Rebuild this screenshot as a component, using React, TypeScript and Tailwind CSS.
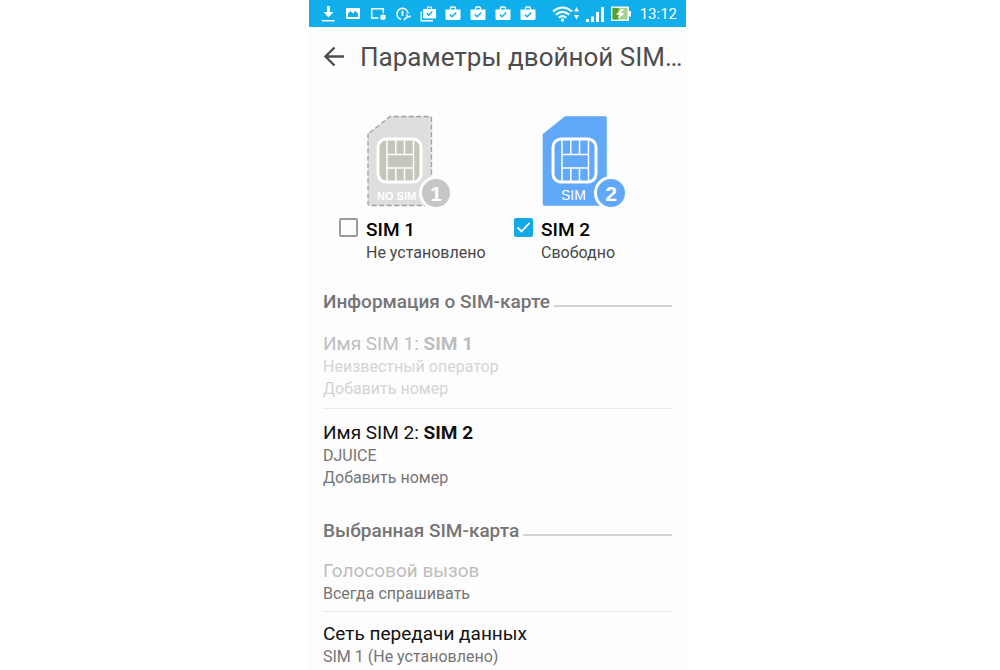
import { useState } from 'react';
import type { ReactNode } from 'react';

const Bag = () => (
  <svg viewBox="0 0 16 16" className="size-4 shrink-0">
    <path d="M5.500 4V2.200Q5.500 1 6.700 1h2.600q1.200 0 1.200 1.200V4" fill="none" stroke="white" strokeWidth="1.300" />
    <path d="M.5 3.500h15v9q0 1.500-1.500 1.500H2Q.5 14 .5 12.500z" fill="white" />
    <path d="M4.800 8.600l2.300 2.200 4.200-4.300" fill="none" stroke="#10aeeb" strokeWidth="1.400" />
  </svg>
);

const StatusBar = () => (
  <header className="flex h-[27px] items-center bg-[#10aeeb] pr-[9px] pl-[11px] text-white">
    <div className="flex items-center gap-[9px]">
      {/* download */}
      <svg viewBox="0 0 16 16" className="size-4 shrink-0" fill="white">
        <path d="M7 0h3v6h3.500l-5 5.500-5-5.500H7z" />
        <path d="M2 14h12.500v1.500H2z" />
      </svg>
      {/* picture */}
      <svg viewBox="0 0 16 16" className="size-4 shrink-0">
        <rect x="1" y="2" width="14" height="11" rx="1" fill="white" />
        <path d="M3 11V7.500L5.500 5l2.500 2.500L10.500 5 13 7.500V11z" fill="#10aeeb" />
      </svg>
      {/* screen with gear */}
      <svg viewBox="0 0 16 16" className="size-4 shrink-0" fill="none" stroke="white">
        <path d="M8.500 12H1.700V2.700h11.600V7" strokeWidth="1.500" />
        <circle cx="13" cy="11.200" r="1.800" strokeWidth="1.600" />
        <path d="M13 8.200v6M10.400 9.700l5.200 3M10.400 12.700l5.200-3" strokeWidth=".8" />
      </svg>
      {/* gauge with wrench */}
      <svg viewBox="0 0 16 16" className="size-4 shrink-0" fill="none" stroke="white">
        <path d="M6 13.200A5.500 5.500 0 1 1 13 7.500" strokeWidth="1.600" />
        <path d="M7.500 4.800v5" strokeWidth="1.800" />
        <path d="M9 14l3.500-3.500M12 8.500q-.5 2.500 2.500 2.200l1-1.200" strokeWidth="1.600" />
      </svg>
      {/* stacked bags */}
      <svg viewBox="0 0 16 16" className="size-4 shrink-0">
        <path d="M1.200 5.500v9.300H13" fill="none" stroke="white" strokeWidth="1.400" />
        <path d="M7.500 3V1.800Q7.500 1 8.300 1h2.400q.8 0 .8.8V3" fill="none" stroke="white" strokeWidth="1.200" />
        <path d="M3 3h13v8.500q0 1-1 1H4q-1 0-1-1z" fill="white" />
        <path d="M6.700 7.300l2 2 3.600-3.800" fill="none" stroke="#10aeeb" strokeWidth="1.300" />
      </svg>
      <Bag />
      <Bag />
      <Bag />
      <Bag />
    </div>
    <div className="ml-auto flex items-center gap-[7px]">
      <svg viewBox="0 0 28 16" className="h-4 w-7 shrink-0" fill="none" stroke="white">
        <path d="M2 5.500Q11.500-2.500 21 5.500M4.800 8.700Q11.500 3 18.200 8.700M7.800 11.800Q11.500 8.500 15.200 11.800" strokeWidth="2" />
        <circle cx="11.500" cy="14" r="1.700" fill="white" stroke="none" />
        <path d="M23 5.500l2.500-4.500 2.500 4.500zM23 9l2.500 4.500L28 9z" fill="white" stroke="none" />
      </svg>
      <svg viewBox="0 0 18 16" className="h-4 w-[18px] shrink-0" fill="white">
        <path d="M0 13h3v3H0zM5 10.500h3V16H5zM10 6h3v10h-3zM15 1h3v15h-3z" />
      </svg>
      <svg viewBox="0 0 20 16" className="h-4 w-5 shrink-0">
        <rect x=".8" y="1.200" width="16.400" height="13" fill="#a6cf93" stroke="white" strokeWidth="1.400" />
        <path d="M1.500 1.900h6v11.600h-6z" fill="#4fa326" />
        <path d="M18 5h2v5.500h-2z" fill="white" />
        <path d="M10.500 3L5 8.500l3.500.5-2 4 7-5.500-3.500-.5L13 3z" fill="white" />
      </svg>
      <time className="pl-[2px] text-[15px] leading-4">13:12</time>
    </div>
  </header>
);

interface SimCardProps {
  slot: number;
  empty?: boolean;
}

const SimCard = ({ slot, empty }: SimCardProps) => {
  const body = empty ? '#dedede' : '#62a8f8';
  const contact = empty ? '#c3c6ba' : '#62a8f8';

  return (
    <svg viewBox="0 0 88 96" className="h-24 w-[88px]" aria-hidden="true">
      <path
        d="M4.500 19L25 2.500h40.500q1 0 1 1.500v86q0 1.500-1.500 1.500H4.500Q3 91.500 3 90V20z"
        fill={body}
        stroke={empty ? '#9f9f9f' : body}
        strokeWidth={empty ? 1.3 : 0.6}
        strokeDasharray={empty ? '5 2.500' : undefined}
      />
      {/* chip */}
      <rect x="13" y="25" width="43" height="43" rx="8" fill={contact} stroke="white" strokeWidth="3" />
      <path
        d="M22 26v41M48.500 26v41M22 40.500h26.500M22 54h26.500M30.800 26v14.500M39.500 26v14.500M30.800 54v13M39.500 54v13"
        stroke="white"
        strokeWidth="1.500"
      />
      <text
        x={empty ? 12 : 21}
        y="86"
        fill="white"
        className={
          empty ? 'font-["Liberation_Sans"] text-[11px] font-bold' : 'font-["Liberation_Sans"] text-[14px]'
        }
      >
        {empty ? 'NO SIM' : 'SIM'}
      </text>
      <circle cx="71" cy="79" r="15.500" fill={empty ? '#c6c6c6' : body} stroke="#fdfdfd" strokeWidth="3" />
      <text
        x="71"
        y="86.500"
        textAnchor="middle"
        fill="white"
        className='font-["Liberation_Sans"] text-[21px] font-bold'
      >
        {slot}
      </text>
    </svg>
  );
};

interface SimSlotProps {
  slot: number;
  status: string;
  empty?: boolean;
  checked: boolean;
  onChange: (checked: boolean) => void;
}

const SimSlot = ({ slot, status, empty, checked, onChange }: SimSlotProps) => (
  <div>
    <div className="pl-[26px]">
      <SimCard slot={slot} empty={empty} />
    </div>
    <label className="mt-[8px] grid grid-cols-[19px_1fr] items-start gap-x-[8px]">
      <span className="grid size-[19px]">
        <input
          type="checkbox"
          checked={checked}
          onChange={(e) => onChange(e.target.checked)}
          className="col-start-1 row-start-1 size-[19px] appearance-none rounded-xs border-2 border-[#9b9b9b] checked:border-[#12a9e6] checked:bg-[#12a9e6]"
        />
        {checked && (
          <svg viewBox="0 0 19 19" className="pointer-events-none z-10 col-start-1 row-start-1 size-[19px]">
            <path d="M3.500 9.500l4 4 8-8.500" fill="none" stroke="white" strokeWidth="1.800" />
          </svg>
        )}
      </span>
      <span className="text-[19px] leading-6 font-medium text-black">SIM {slot}</span>
      <span className="col-start-2 text-base leading-[22px] text-[#484848]">{status}</span>
    </label>
  </div>
);

const SectionTitle = ({ children }: { children: ReactNode }) => (
  <div className="flex items-center gap-[4px]">
    <h2 className="text-[19px] leading-6 font-medium text-[#757575]">{children}</h2>
    <span className="mt-[8px] h-[2px] flex-1 bg-[#d2d2d2]" />
  </div>
);

const App = () => {
  const [sim1, setSim1] = useState(false);
  const [sim2, setSim2] = useState(true);

  return (
    <div className="bg-white pr-[5px] font-[Roboto,'Noto_Sans',sans-serif]">
      <div className="mx-auto min-h-screen max-w-[377px] bg-[#fdfdfd]">
        <StatusBar />

        <div className="flex items-center gap-[15px] pt-[14px] pl-[14px]">
          <button type="button" aria-label="Назад" className="shrink-0">
            <svg viewBox="0 0 22 22" className="size-[22px]" fill="none" stroke="#4d4d4d" strokeWidth="2.400">
              <path d="M21 10.500H2.500M11.500 1.500l-9 9 9 9" />
            </svg>
          </button>
          <h1 className="text-[26px] leading-8 whitespace-nowrap text-[#4d4d4d]">Параметры двойной SIM…</h1>
        </div>

        <div className="grid grid-cols-2 gap-[3px] pt-[41px] pl-[30px]">
          <SimSlot slot={1} status="Не установлено" empty checked={sim1} onChange={setSim1} />
          <SimSlot slot={2} status="Свободно" checked={sim2} onChange={setSim2} />
        </div>

        <main className="px-[14px] pt-[26px]">
          <SectionTitle>Информация о SIM-карте</SectionTitle>

          <button
            type="button"
            disabled
            className="mt-[18px] block w-full border-b border-[#ebebeb] pb-[8px] text-left text-base leading-[22px] text-[#d4d4d4]"
          >
            <span className="block text-[19px] leading-6 text-[#bdbdbd]">
              Имя SIM 1: <b className="font-bold">SIM 1</b>
            </span>
            <span className="block">Неизвестный оператор</span>
            <span className="block">Добавить номер</span>
          </button>

          <button type="button" className="block w-full pt-[12px] text-left text-base leading-[22px] text-[#757575]">
            <span className="block text-[19px] leading-6 text-[#111111]">
              Имя SIM 2: <b className="font-bold">SIM 2</b>
            </span>
            <span className="block">DJUICE</span>
            <span className="block">Добавить номер</span>
          </button>

          <div className="pt-[30px]">
            <SectionTitle>Выбранная SIM-карта</SectionTitle>
          </div>

          <button
            type="button"
            disabled
            className="mt-[16px] block w-full border-b border-[#ebebeb] pb-[6px] text-left text-base leading-[22px] text-[#757575]"
          >
            <span className="block text-[19px] leading-6 text-[#bdbdbd]">Голосовой вызов</span>
            <span className="block">Всегда спрашивать</span>
          </button>

          <button type="button" className="block w-full pt-[10px] text-left text-base leading-[22px] text-[#757575]">
            <span className="block text-[19px] leading-6 text-[#111111]">Сеть передачи данных</span>
            <span className="block">SIM 1 (Не установлено)</span>
          </button>
        </main>
      </div>
    </div>
  );
};

export default App;
